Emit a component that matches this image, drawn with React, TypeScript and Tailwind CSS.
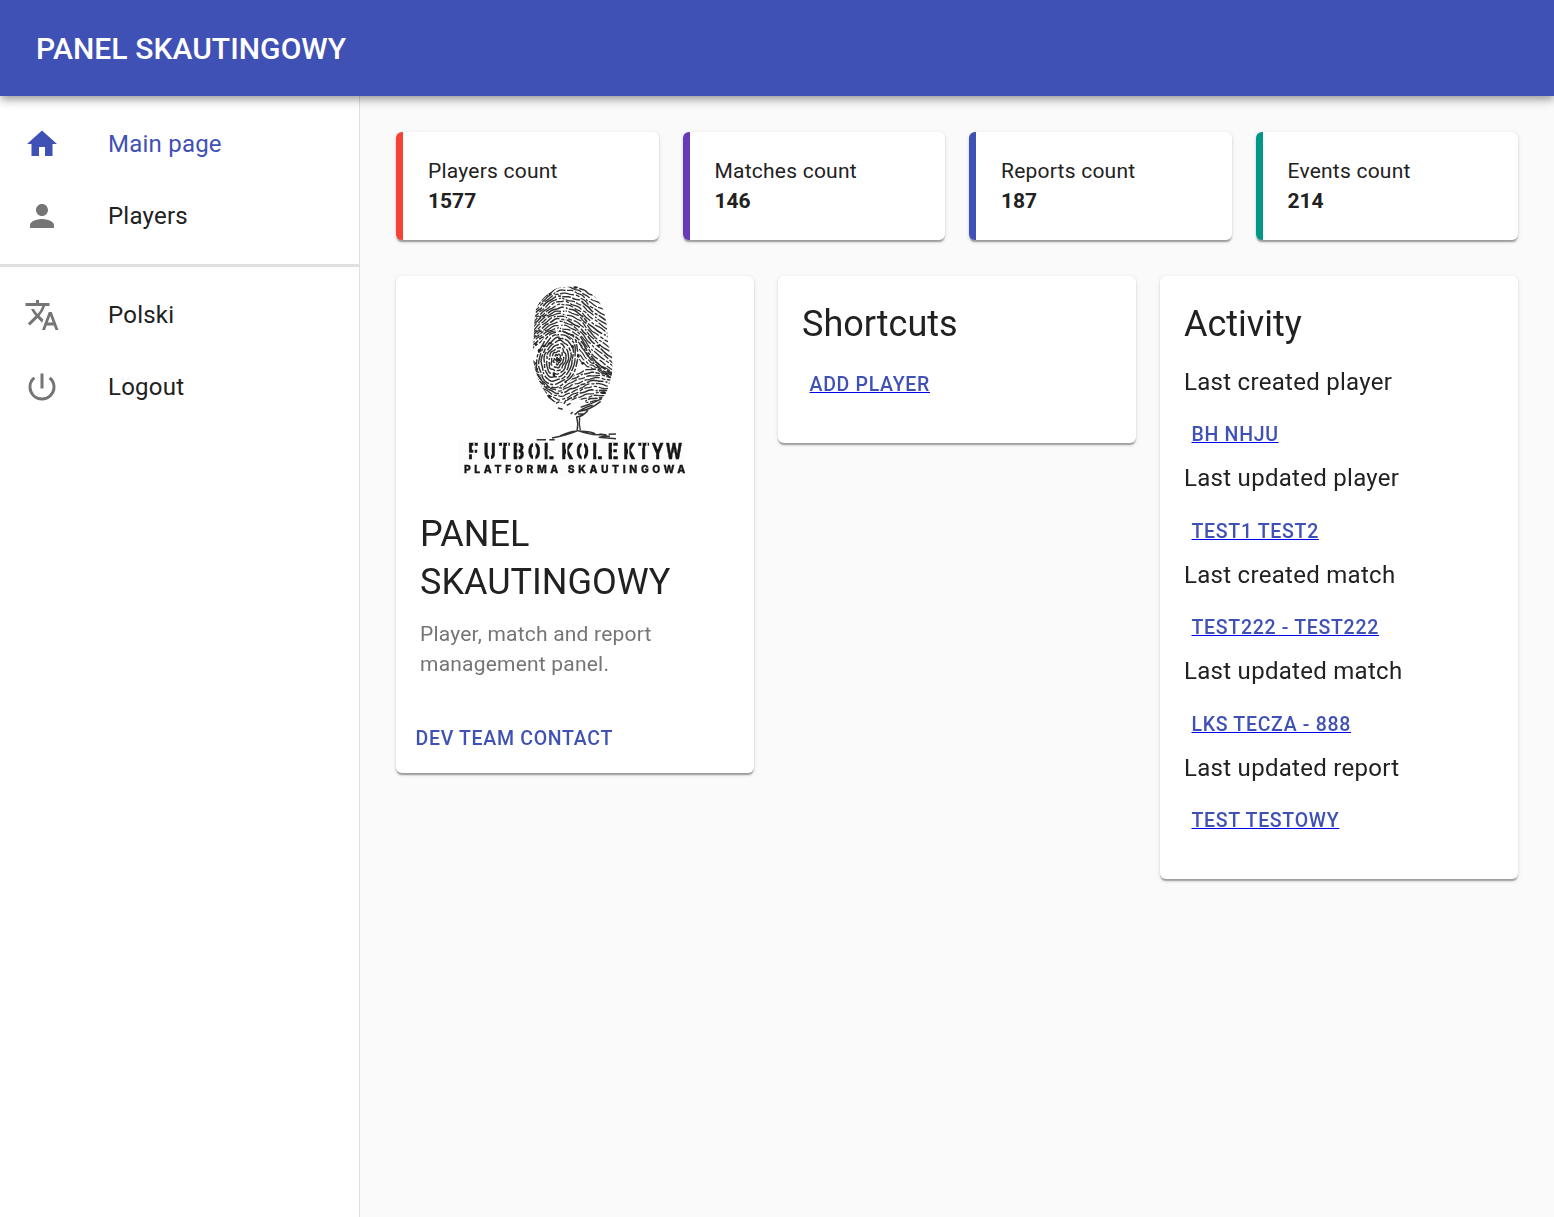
import type { ReactNode } from "react";
import { MdHome, MdPerson, MdPowerSettingsNew, MdTranslate } from "react-icons/md";

const cardShadow =
  "shadow-[0_3px_1.5px_-1.5px_rgba(0,0,0,0.2),0_1.5px_1.5px_0_rgba(0,0,0,0.14),0_1.5px_4.5px_0_rgba(0,0,0,0.12)]";

const stats = [
  { label: "Players count", value: 1577, border: "border-[#f44336]" },
  { label: "Matches count", value: 146, border: "border-[#673ab7]" },
  { label: "Reports count", value: 187, border: "border-[#3f51b5]" },
  { label: "Events count", value: 214, border: "border-[#009688]" },
];

const activity = [
  ["Last created player", "BH NHJU"],
  ["Last updated player", "TEST1 TEST2"],
  ["Last created match", "TEST222 - TEST222"],
  ["Last updated match", "LKS TECZA - 888"],
  ["Last updated report", "TEST TESTOWY"],
];

/* Turns anchor points into a slightly trembling polyline. */
function tremble(points: [number, number][], seed: number) {
  let d = "";
  let n = 0;
  for (let i = 0; i < points.length - 1; i++) {
    const p0 = points[Math.max(0, i - 1)];
    const p1 = points[i];
    const p2 = points[i + 1];
    const p3 = points[Math.min(points.length - 1, i + 2)];
    for (let s = 0; s < 12; s++) {
      const t = s / 12;
      const c = (a: number, b: number, e: number, f: number) =>
        0.5 * (2 * b + (e - a) * t + (2 * a - 5 * b + 4 * e - f) * t * t + (3 * b - a - 3 * e + f) * t * t * t);
      const x = c(p0[0], p1[0], p2[0], p3[0]);
      const y = c(p0[1], p1[1], p2[1], p3[1]) + Math.sin(n * 0.9 + seed * 2.3) * 1.3 + Math.sin(x * 0.06 + seed) * 1.6;
      d += `${n ? "L" : "M"}${x.toFixed(1)} ${y.toFixed(1)}`;
      n++;
    }
  }
  return d;
}

function whorlRing(k: number) {
  const r = 4 + k * 8.8;
  let d = "";
  for (let i = 0; i <= 60; i++) {
    const a = (i / 60) * Math.PI * 2;
    const q = r + Math.sin(a * 5 + k * 0.7) * 1.5 + Math.sin(a * 9 + k * 1.9) * 1;
    const x = 322 + Math.cos(a) * q * 0.82 - Math.sin(a) * q * 0.16;
    const y = 250 + Math.sin(a) * q * 1.14;
    d += `${i ? "L" : "M"}${x.toFixed(1)} ${y.toFixed(1)}`;
  }
  return d;
}

const dash = (k: number) =>
  `${22 + ((k * 17) % 31)} ${4 + (k % 3)} ${9 + ((k * 7) % 19)} 5 ${30 + ((k * 5) % 23)} 6 ${6 + ((k * 3) % 9)} 4`;

const arches = Array.from({ length: 19 }, (_, n) => {
  const j = n - 1;
  return tremble(
    [
      [236, 218 - 7.4 * j],
      [270, 190 - 7.6 * j],
      [325, 164 - 8.6 * j],
      [385, 190 - 9.8 * j],
      [430, 248 - 11.7 * j],
      [500, 306 - 13 * j],
    ],
    j,
  );
});
const lower = Array.from({ length: 17 }, (_, n) => {
  const j = n - 3;
  return tremble(
    [
      [236, 262 + 10 * j],
      [275, 312 + 9.4 * j],
      [325, 344 + 9 * j],
      [372, 326 + 9 * j],
      [430, 306 + 8.8 * j],
      [500, 318 + 8 * j],
    ],
    j + 40,
  );
});
const wedge = Array.from({ length: 4 }, (_, j) =>
  tremble(
    [
      [388, 204 + 15 * j],
      [415, 240 + 11 * j],
      [450, 266 + 7 * j],
      [500, 300 + 3 * j],
    ],
    j + 70,
  ),
);
const whorl = Array.from({ length: 9 }, (_, k) => whorlRing(k));

const specks: [number, number, number, number][] = [
  [268, 224, 5, 6], [258, 205, 3, 5], [327, 252, 4, 5], [312, 296, 4, 7], [385, 240, 4, 5],
  [398, 262, 4, 4], [330, 188, 6, 3], [300, 202, 6, 3], [460, 350, 8, 4], [296, 362, 7, 5],
  [368, 212, 4, 5], [282, 210, 6, 3], [448, 208, 4, 3], [347, 318, 3, 4], [376, 35, 6, 3], [300, 54, 5, 3],
];

/* Left edge of each letter of the stencil line, before horizontal narrowing. */
const stencilX = [54, 101, 146, 188, 234, 281, 310, 334, 379, 427, 473, 520, 564, 606, 648]
  .map((x) => (x / 0.84).toFixed(1))
  .join(" ");

function Logo() {
  return (
    <svg viewBox="0 0 750 630" className="block h-[210px] w-[250px] shrink-0" role="img" aria-label="Futbol Kolektyw">
      <defs>
        <clipPath id="thumb">
          <path d="M300 48C325 28 350 36 372 30C410 36 440 60 456 92C474 130 470 172 476 212C492 236 490 284 480 316C474 340 470 354 456 366C430 384 408 388 392 370C372 376 356 370 340 378C318 386 298 376 288 352C262 316 248 270 248 224C254 180 250 140 258 100C268 74 284 62 300 48Z" />
        </clipPath>
        <filter id="soft" x="-5%" y="-5%" width="110%" height="110%">
          <feGaussianBlur stdDeviation="1.9" />
        </filter>
      </defs>
      <g filter="url(#soft)">
        <rect x="25" y="492" width="680" height="112" fill="#fcfcfc" />
        <g clipPath="url(#thumb)" fill="none" stroke="#303030">
          {arches.map((d, i) => (
            <path key={i} d={d} strokeWidth={i % 4 === 1 ? 4.8 : 3.9} strokeDasharray={dash(i)} />
          ))}
          {lower.map((d, i) => (
            <path key={i} d={d} strokeWidth={i % 3 === 1 ? 4.7 : 3.9} strokeDasharray={dash(i + 5)} />
          ))}
          {wedge.map((d, i) => (
            <path key={i} d={d} strokeWidth="3.4" strokeDasharray={dash(i + 9)} />
          ))}
          <ellipse cx="322" cy="250" rx="61" ry="84" fill="#fff" stroke="none" />
          {whorl.map((d, i) => (
            <path key={i} d={d} strokeWidth="4.3" strokeDasharray={dash(i + 3)} />
          ))}
          <path d="M345 66V134M334 142L320 176" stroke="#fff" strokeWidth="3.5" />
          <g fill="#222" stroke="none">
            {specks.map(([x, y, rx, ry], i) => (
              <ellipse key={i} cx={x} cy={y} rx={rx} ry={ry} />
            ))}
          </g>
        </g>
        <g fill="none" stroke="#333" strokeWidth="4.5">
          <path d="M318 382L328 377M324 396L338 400M350 388L362 382M362 414L368 408M342 384L348 372" />
          <path d="M392 394Q424 384 456 368M388 406Q420 402 452 376M374 416Q400 394 428 388M378 424Q402 420 414 402M384 414H402" />
          <path d="M380 424Q386 444 381 464M389 424Q386 446 391 464" strokeWidth="4" />
          <path d="M260 491H288M298 491H314M306 486Q350 478 384 464Q420 478 452 476M330 480Q360 466 378 466M392 466Q422 466 436 474M446 484L498 488M448 474L470 477M476 475L498 474M452 480L480 481" />
        </g>
        <g fill="#141414">
          <text
            x={stencilX}
            y="550"
            transform="scale(0.84 1)"
            className="font-['Roboto'] font-bold"
            fontSize="65"
            stroke="#141414"
            strokeWidth="1.5"
          >
            FUTBOL KOLEKTYW
          </text>
          <g fill="#fcfcfc">
            <path d="M56 530H68V535H56ZM70 500H74V552H70ZM117 534H123V553H117ZM156 500H160V515H156ZM171 500H175V515H171ZM202 500H206V552H202ZM249 500H256V553H249ZM293 520H298V553H293ZM348 500H352V552H348ZM395 500H402V553H395ZM439 520H444V553H439ZM486 500H490V552H486ZM534 500H538V552H534ZM574 500H578V515H574ZM589 500H593V515H589ZM668 530H673V553H668Z" />
          </g>
          <text
            x="42"
            y="592"
            textLength="664"
            lengthAdjust="spacing"
            className="font-['Inter'] font-extrabold"
            fontSize="31"
            stroke="#141414"
            strokeWidth="0.8"
          >
            PLATFORMA SKAUTINGOWA
          </text>
        </g>
      </g>
    </svg>
  );
}

function NavItem({ icon, label, active = false }: { icon: ReactNode; label: string; active?: boolean }) {
  return (
    <a
      className={`flex h-[72px] items-center px-6 text-2xl leading-9 tracking-[0.00938em] ${active ? "text-[#3f51b5]" : "text-[#212121]"}`}
    >
      <span className={`w-[84px] shrink-0 text-4xl ${active ? "text-[#3f51b5]" : "text-[#757575]"}`}>{icon}</span>
      {label}
    </a>
  );
}

function ButtonLink({ children, underlined = true }: { children: ReactNode; underlined?: boolean }) {
  return (
    <a
      className={`flex w-fit px-[7.5px] pt-[7.5px] pb-[4.5px] text-[19.5px] leading-[34.1px] font-medium tracking-[0.036em] text-[#3f51b5] uppercase ${underlined ? "underline decoration-[#0000ee] decoration-1 [text-decoration-skip-ink:none]" : ""}`}
    >
      {children}
    </a>
  );
}

export default function App() {
  return (
    <div className="flex h-screen flex-col overflow-hidden bg-[#fafafa] font-['Roboto',sans-serif] text-[#212121]">
      <header className="relative z-10 flex h-24 shrink-0 items-center bg-[#3f51b5] px-9 pt-0.5 shadow-[0_3px_6px_-1.5px_rgba(0,0,0,0.2),0_6px_7.5px_0_rgba(0,0,0,0.14),0_1.5px_15px_0_rgba(0,0,0,0.12)]">
        <h1 className="text-[30px] leading-[48px] font-medium tracking-[0.0025em] text-white">PANEL SKAUTINGOWY</h1>
      </header>
      <div className="flex min-h-0 flex-1">
        <aside className="w-[360px] shrink-0 border-r border-[#e0e0e0] bg-white">
          <nav className="py-3">
            <NavItem icon={<MdHome />} label="Main page" active />
            <NavItem icon={<MdPerson />} label="Players" />
          </nav>
          <div className="h-[3px] bg-[#e0e0e0]" />
          <nav className="py-3">
            <NavItem icon={<MdTranslate />} label="Polski" />
            <NavItem icon={<MdPowerSettingsNew />} label="Logout" />
          </nav>
        </aside>
        <main className="flex-1 p-9">
          <div className="grid grid-cols-4 gap-6">
            {stats.map((s) => (
              <div
                key={s.label}
                className={`rounded-md border-l-[7px] bg-white p-6 pl-[25px] text-[21px] leading-[30px] tracking-[0.01071em] ${s.border} ${cardShadow}`}
              >
                <p>{s.label}</p>
                <p className="font-bold tracking-normal">{s.value}</p>
              </div>
            ))}
          </div>
          <div className="mt-9 grid grid-cols-3 items-start gap-6">
            <section className={`rounded-md bg-white ${cardShadow}`}>
              <div className="flex justify-center">
                <Logo />
              </div>
              <div className="p-6">
                <h2 className="mb-[12.6px] text-4xl leading-[48px]">PANEL SKAUTINGOWY</h2>
                <p className="text-[21px] leading-[30px] tracking-[0.01em] text-[#757575]">
                  Player, match and report management panel.
                </p>
              </div>
              <div className="p-3">
                <ButtonLink underlined={false}>Dev team contact</ButtonLink>
              </div>
            </section>
            <section className={`rounded-md bg-white p-6 pb-9 ${cardShadow}`}>
              <h2 className="mb-[12.6px] text-4xl leading-[48px]">Shortcuts</h2>
              <ButtonLink>Add player</ButtonLink>
            </section>
            <section className={`rounded-md bg-white p-6 pb-9 ${cardShadow}`}>
              <h2 className="mb-[12.6px] text-4xl leading-[48px]">Activity</h2>
              {activity.map(([label, link]) => (
                <div key={label}>
                  <p className="mb-[8.4px] text-2xl leading-[42px] tracking-[0.012em]">{label}</p>
                  <ButtonLink>{link}</ButtonLink>
                </div>
              ))}
            </section>
          </div>
        </main>
      </div>
    </div>
  );
}
